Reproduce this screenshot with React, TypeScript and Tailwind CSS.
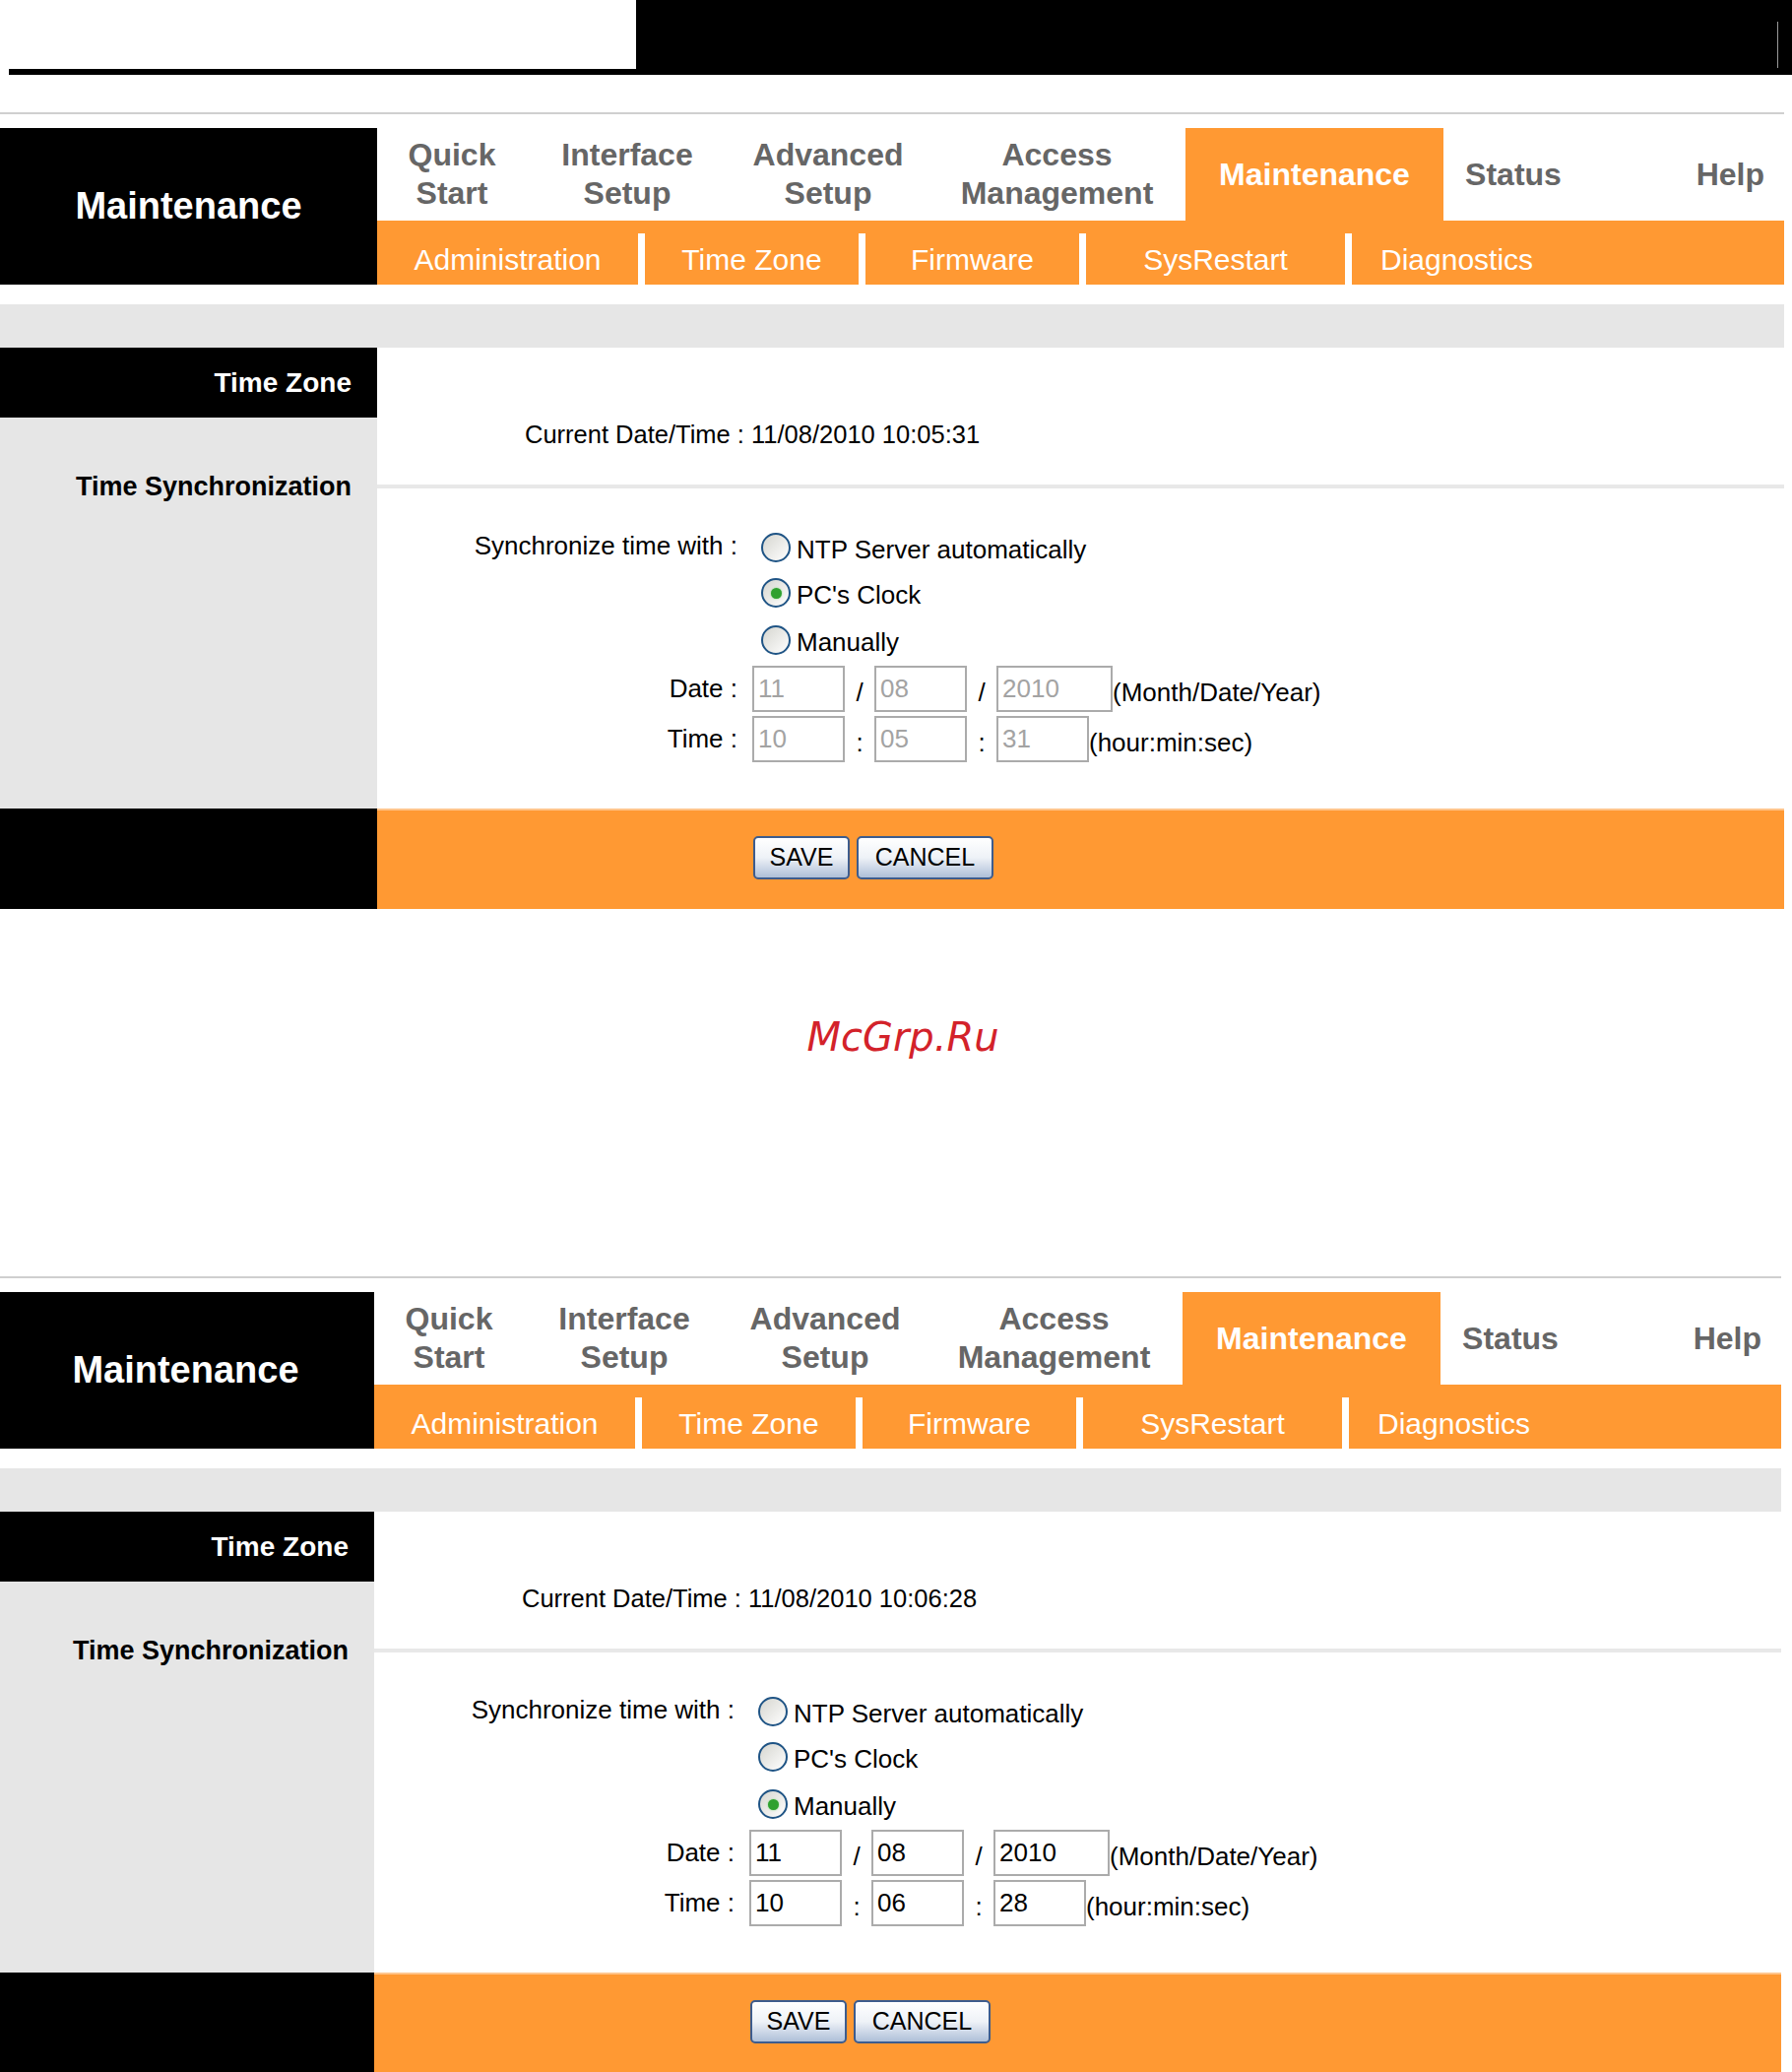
import React from 'react';

const topItems = [
    { lines: ['Quick', 'Start'], width: 'w-[152px]' },
    { lines: ['Interface', 'Setup'], width: 'w-[204px]' },
    { lines: ['Advanced', 'Setup'], width: 'w-[204px]' },
    { lines: ['Access', 'Management'], width: 'w-[261px]' },
];

const subItems = [
    { label: 'Administration', width: 'w-[265px]' },
    { label: 'Time Zone', width: 'w-[217px]' },
    { label: 'Firmware', width: 'w-[217px]' },
    { label: 'SysRestart', width: 'w-[263px]' },
];

function Radio({ checked }: { checked?: boolean }) {
    return (
        <div className="w-[30px] h-[30px] rounded-full border-2 border-[#1f5485] bg-linear-to-br from-[#d6d6d0] to-white flex items-center justify-center shrink-0">
            {checked && <div className="w-[11px] h-[11px] rounded-full bg-[#2fa12f] shadow-[0_0_2px_#7fd67f]" />}
        </div>
    );
}

function Field({ value, width, disabled }: { value: string; width: string; disabled: boolean }) {
    return (
        <input
            readOnly
            disabled={disabled}
            value={value}
            className={`${width} h-[47px] border-2 border-[#ababab] bg-white px-[4px] text-[26px] outline-none ${disabled ? 'text-[#a3a3a3]' : 'text-black'}`}
        />
    );
}

function Sep({ ch }: { ch: string }) {
    return <span className="w-[30px] text-center pt-[8px]">{ch}</span>;
}

interface BlockProps {
    now: string;
    manual: boolean;
    date: [string, string, string];
    time: [string, string, string];
}

function Block({ now, manual, date, time }: BlockProps) {
    const off = !manual;
    return (
        <div className="w-[1812px]">
            <div className="h-[2px] bg-[#cfcfcf]" />
            <div className="h-[14px]" />

            {/* nav */}
            <div className="flex h-[159px]">
                <div className="w-[383px] bg-black flex items-center justify-center text-white font-bold text-[38px]">
                    Maintenance
                </div>
                <div className="flex-1 flex flex-col">
                    <div className="h-[94px] flex bg-white text-[#666] font-bold text-[32px] leading-[39px]">
                        {topItems.map((it) => (
                            <div key={it.lines[0]} className={`${it.width} flex flex-col items-center justify-center`}>
                                <span>{it.lines[0]}</span>
                                <span>{it.lines[1]}</span>
                            </div>
                        ))}
                        <div className="w-[262px] bg-[#ff9933] text-white flex items-center justify-center">Maintenance</div>
                        <div className="w-[142px] flex items-center justify-center">Status</div>
                        <div className="flex-1 flex items-center justify-end pr-[20px]">Help</div>
                    </div>
                    <div className="h-[65px] bg-[#ff9933] flex flex-col">
                        <div className="h-[13px]" />
                        <div className="flex-1 flex text-white text-[30px]">
                            {subItems.map((s) => (
                                <React.Fragment key={s.label}>
                                    <div className={`${s.width} flex items-center justify-center`}>{s.label}</div>
                                    <div className="w-[7px] bg-white" />
                                </React.Fragment>
                            ))}
                            <div className="flex-1 flex items-center pl-[29px]">Diagnostics</div>
                        </div>
                    </div>
                </div>
            </div>

            <div className="h-[20px]" />
            <div className="h-[44px] bg-[#e6e6e6]" />

            {/* content */}
            <div className="flex h-[468px]">
                <div className="w-[383px] flex flex-col font-bold text-[27px] text-right">
                    <div className="h-[71px] bg-black text-white leading-[71px] pr-[26px] text-[28px]">Time Zone</div>
                    <div className="flex-1 bg-[#e6e6e6] pt-[53px] pr-[26px] leading-[34px] text-black">Time Synchronization</div>
                </div>
                <div className="flex-1 bg-white flex flex-col text-[26px] text-black">
                    <div className="h-[71px]" />
                    <div className="h-[34px] leading-[34px] pl-[150px] text-[25.5px]">Current Date/Time : {now}</div>
                    <div className="h-[34px]" />
                    <div className="h-[4px] bg-[#e8e8e8]" />
                    <div className="h-[34px]" />

                    <div className="flex h-[48px] items-center">
                        <div className="w-[366px] text-right">Synchronize time with :</div>
                        <div className="ml-[24px] flex items-center gap-[6px] pt-[4px]">
                            <Radio />
                            <span className="pt-[4px]">NTP Server automatically</span>
                        </div>
                    </div>
                    <div className="flex h-[48px] items-center">
                        <div className="w-[366px]" />
                        <div className="ml-[24px] flex items-center gap-[6px]">
                            <Radio checked={!manual} />
                            <span className="pt-[4px]">PC's Clock</span>
                        </div>
                    </div>
                    <div className="flex h-[48px] items-center">
                        <div className="w-[366px]" />
                        <div className="ml-[24px] flex items-center gap-[6px]">
                            <Radio checked={manual} />
                            <span className="pt-[4px]">Manually</span>
                        </div>
                    </div>

                    <div className="flex h-[51px] items-center">
                        <div className="w-[366px] text-right">Date :</div>
                        <div className="ml-[15px] flex items-center">
                            <Field value={date[0]} width="w-[94px]" disabled={off} />
                            <Sep ch="/" />
                            <Field value={date[1]} width="w-[94px]" disabled={off} />
                            <Sep ch="/" />
                            <Field value={date[2]} width="w-[118px]" disabled={off} />
                            <span className="pt-[8px]">(Month/Date/Year)</span>
                        </div>
                    </div>
                    <div className="flex h-[51px] items-center">
                        <div className="w-[366px] text-right">Time :</div>
                        <div className="ml-[15px] flex items-center">
                            <Field value={time[0]} width="w-[94px]" disabled={off} />
                            <Sep ch=":" />
                            <Field value={time[1]} width="w-[94px]" disabled={off} />
                            <Sep ch=":" />
                            <Field value={time[2]} width="w-[94px]" disabled={off} />
                            <span className="pt-[8px]">(hour:min:sec)</span>
                        </div>
                    </div>
                </div>
            </div>

            {/* footer */}
            <div className="flex h-[102px]">
                <div className="w-[383px] bg-black" />
                <div className="flex-1 bg-[#ff9933] border-t-2 border-[#ffc58c] flex items-center pl-[382px] gap-[7px]">
                    <button className="w-[98px] h-[44px] -mt-[4px] rounded-[5px] border-2 border-[#3d5c8d] bg-linear-to-b from-white via-[#eef2f7] to-[#aebfd8] text-[25px] text-black">
                        SAVE
                    </button>
                    <button className="w-[139px] h-[44px] -mt-[4px] rounded-[5px] border-2 border-[#3d5c8d] bg-linear-to-b from-white via-[#eef2f7] to-[#aebfd8] text-[25px] text-black">
                        CANCEL
                    </button>
                </div>
            </div>
        </div>
    );
}

export default function App() {
    return (
        <div className="w-[1820px] min-h-[2104px] bg-white overflow-hidden font-['Liberation_Sans',Arial,sans-serif]">
            <div className="flex h-[76px]">
                <div className="w-[646px] flex flex-col justify-end pl-[9px]">
                    <div className="h-[6px] bg-black" />
                </div>
                <div className="relative flex-1 bg-black">
                    <div className="absolute left-[1159px] top-[22px] w-[1px] h-[47px] bg-[#9a9a9a]" />
                </div>
            </div>
            <div className="h-[38px]" />

            <Block now="11/08/2010 10:05:31" manual={false} date={['11', '08', '2010']} time={['10', '05', '31']} />

            <div className="h-[373px] pt-[105px] pl-[22px] w-[1812px] text-center">
                <span className="font-['DejaVu_Sans',sans-serif] italic text-[40px] leading-[50px] text-[#d3222a]">McGrp.Ru</span>
            </div>

            <div className="-ml-[3px]">
                <Block now="11/08/2010 10:06:28" manual={true} date={['11', '08', '2010']} time={['10', '06', '28']} />
            </div>
        </div>
    );
}
